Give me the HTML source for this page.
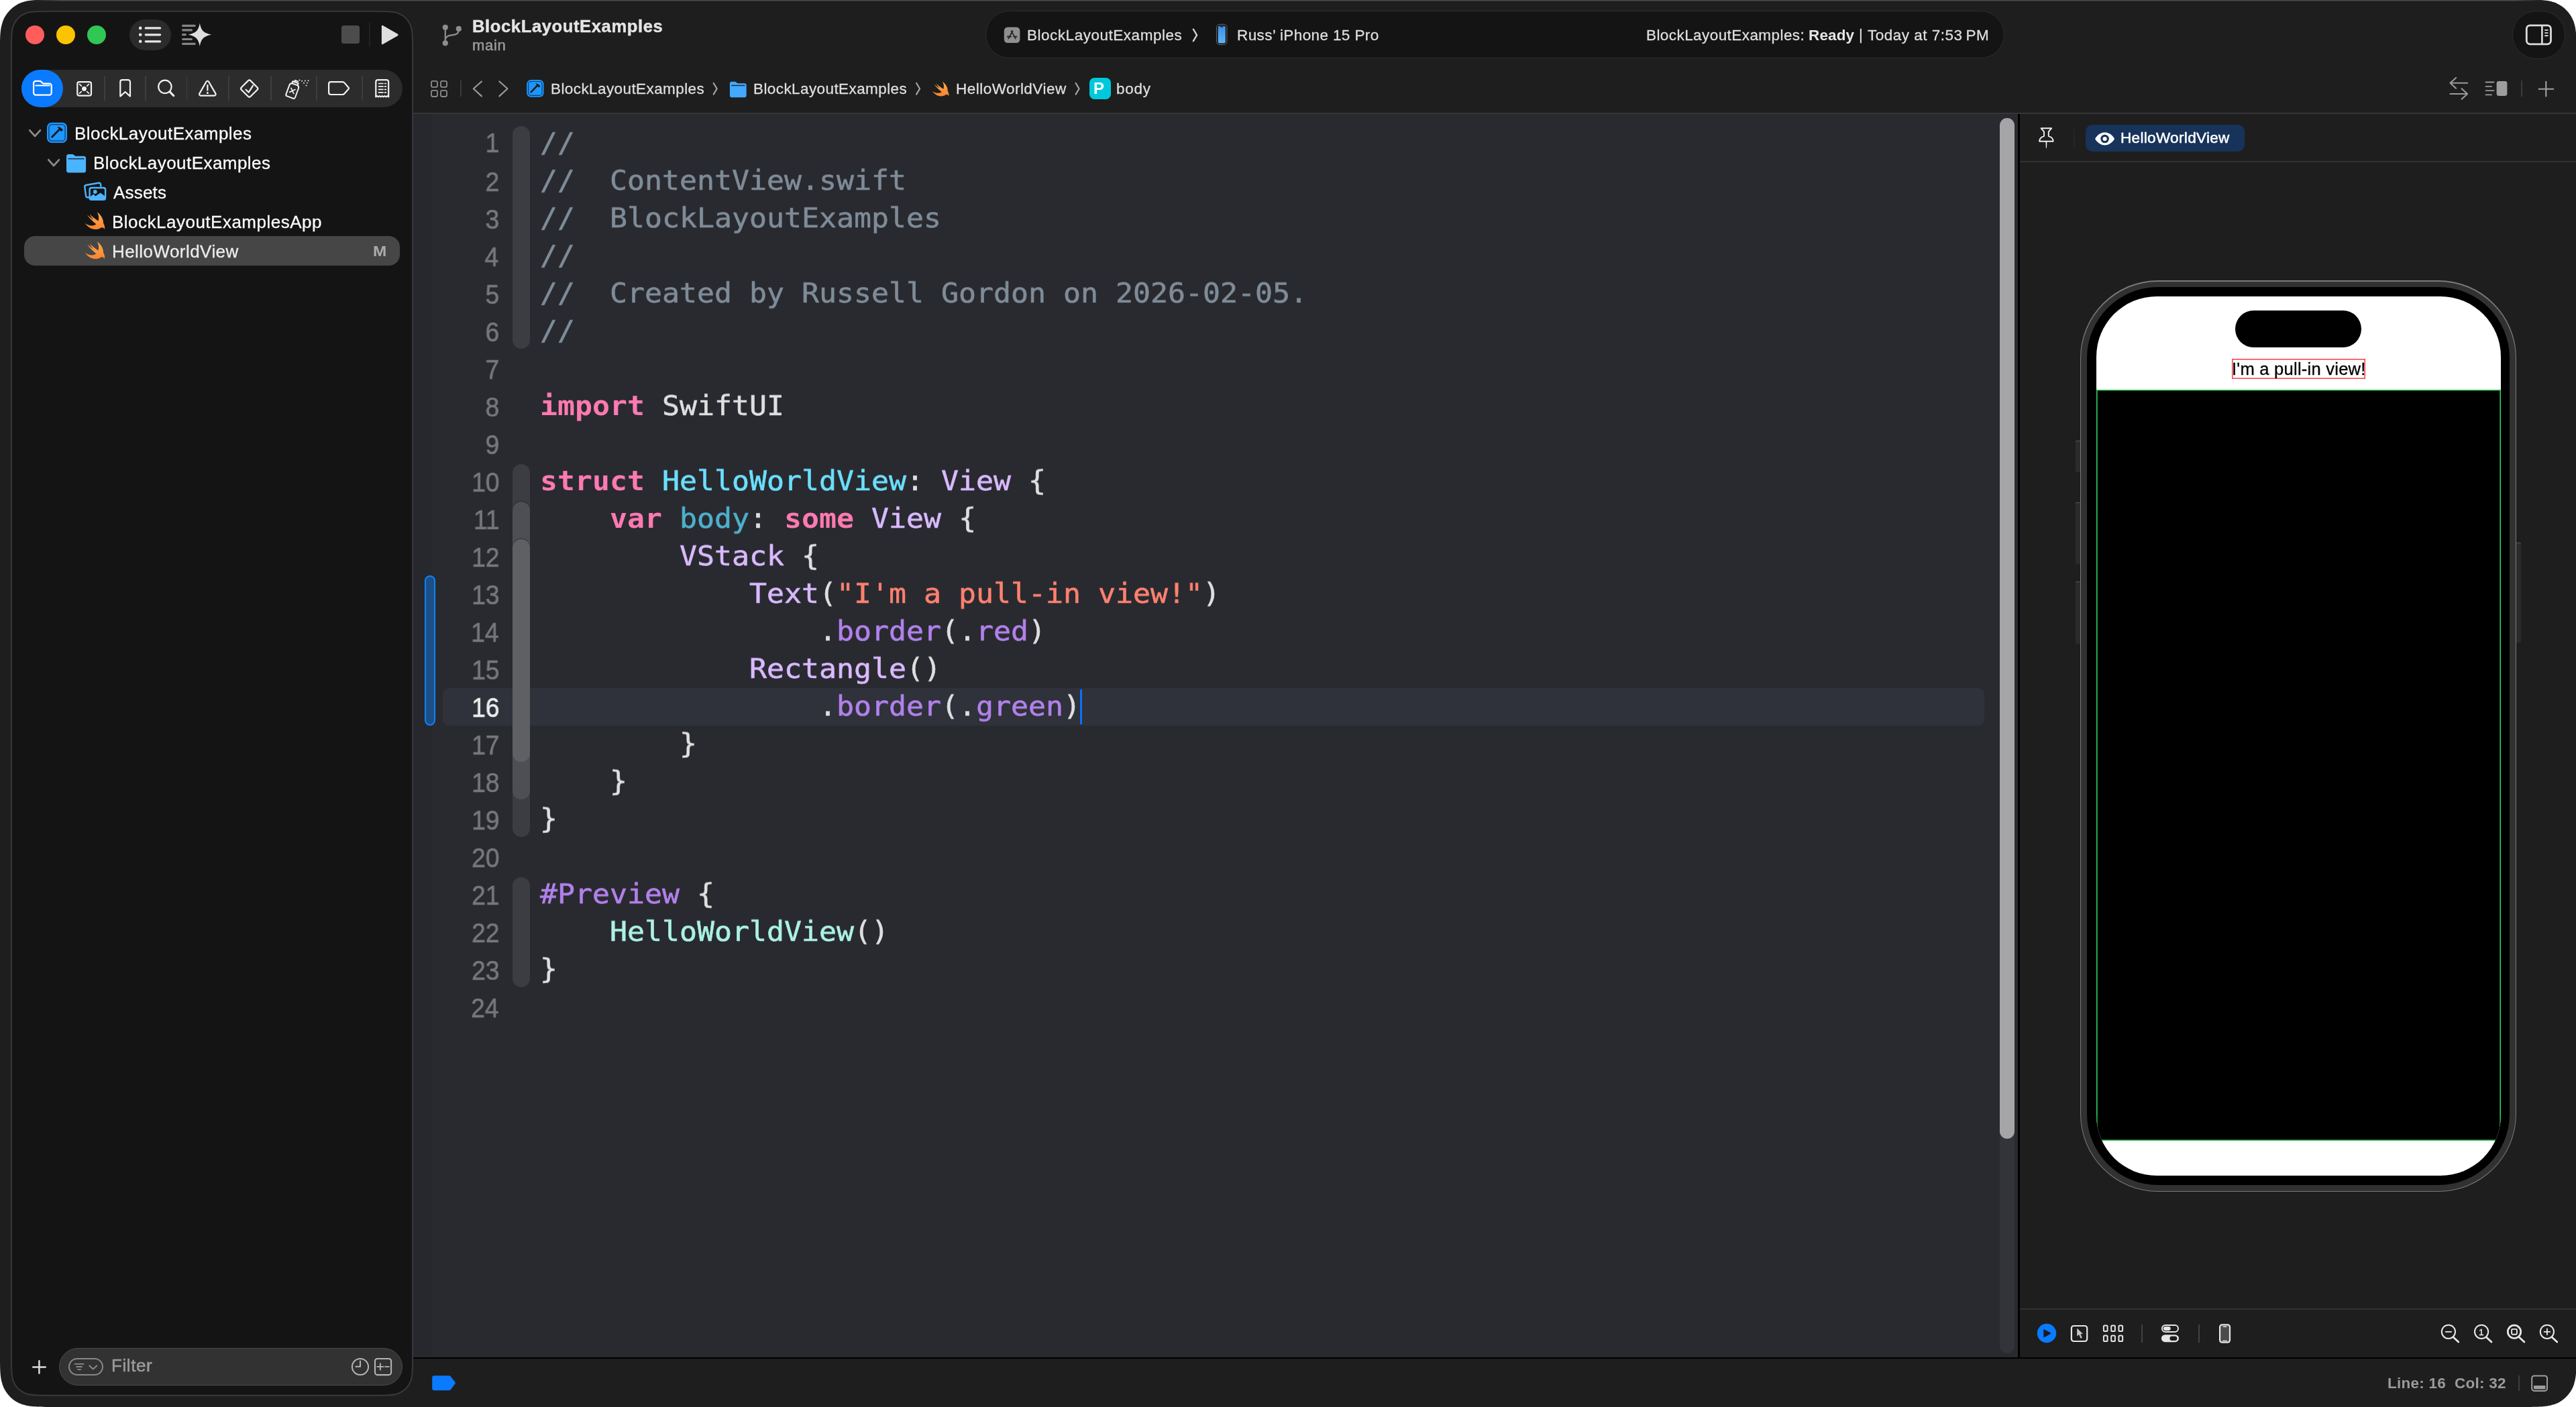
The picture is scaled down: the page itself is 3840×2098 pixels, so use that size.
<!DOCTYPE html>
<html lang="en"><head><meta charset="utf-8"><title>BlockLayoutExamples — HelloWorldView.swift</title>
<style>
html,body{margin:0;padding:0;background:#fff;}
body{width:3840px;height:2098px;overflow:hidden;position:relative;}
.a{position:absolute;white-space:pre;box-sizing:border-box;}
.s{font-family:"Liberation Sans", sans-serif;will-change:transform;-webkit-text-stroke:0.3px;}
.m{font-family:"DejaVu Sans Mono", "Liberation Mono", monospace;will-change:transform;}
svg{overflow:visible;}
.cl{left:805px;line-height:56px;font-size:43.19px;color:#dfdfe0;-webkit-text-stroke:0.6px;transform:scaleY(0.96);transform-origin:0 42.94px;}
.cl b{-webkit-text-stroke:0;}
</style></head>
<body>
<svg class="a" style="left:0;top:0" width="3840" height="2098" viewBox="0 0 3840 2098"><defs><linearGradient id="tl" x1="0" x2="1" y1="0" y2="0"><stop offset="0" stop-color="#4c4c4c" stop-opacity="0"/><stop offset="0.012" stop-color="#4c4c4c"/><stop offset="0.988" stop-color="#4c4c4c"/><stop offset="1" stop-color="#4c4c4c" stop-opacity="0"/></linearGradient></defs><path d="M79.49 -0.40 L3761.11 -0.40 C3784.00 -0.40 3795.44 -0.40 3805.76 3.01 L3807.76 3.50 C3821.21 8.39 3831.81 18.99 3836.70 32.44 L3837.19 34.44 C3840.60 44.76 3840.60 56.20 3840.60 79.09 L3840.60 2018.51 C3840.60 2041.40 3840.60 2052.84 3837.19 2063.16 L3836.70 2065.16 C3831.81 2078.61 3821.21 2089.21 3807.76 2094.10 L3805.76 2094.59 C3795.44 2098.00 3784.00 2098.00 3761.11 2098.00 L79.49 2098.00 C56.60 2098.00 45.16 2098.00 34.84 2094.59 L32.84 2094.10 C19.39 2089.21 8.79 2078.61 3.90 2065.16 L3.41 2063.16 C0.00 2052.84 0.00 2041.40 0.00 2018.51 L0.00 79.09 C0.00 56.20 0.00 44.76 3.41 34.44 L3.90 32.44 C8.79 18.99 19.39 8.39 32.84 3.50 L34.84 3.01 C45.16 -0.40 56.60 -0.40 79.49 -0.40 Z" fill="#1e1e1e"/><rect x="48" y="0" width="3744" height="1.5" fill="url(#tl)"/><path d="M70.40 16.90 L561.60 16.90 C577.00 16.90 584.71 16.90 591.65 19.19 L593.00 19.52 C602.05 22.82 609.18 29.95 612.48 39.00 L612.81 40.35 C615.10 47.29 615.10 55.00 615.10 70.40 L615.10 2027.30 C615.10 2042.70 615.10 2050.41 612.81 2057.35 L612.48 2058.70 C609.18 2067.75 602.05 2074.88 593.00 2078.18 L591.65 2078.51 C584.71 2080.80 577.00 2080.80 561.60 2080.80 L70.40 2080.80 C55.00 2080.80 47.29 2080.80 40.35 2078.51 L39.00 2078.18 C29.95 2074.88 22.82 2067.75 19.52 2058.70 L19.19 2057.35 C16.90 2050.41 16.90 2042.70 16.90 2027.30 L16.90 70.40 C16.90 55.00 16.90 47.29 19.19 40.35 L19.52 39.00 C22.82 29.95 29.95 22.82 39.00 19.52 L40.35 19.19 C47.29 16.90 55.00 16.90 70.40 16.90 Z" fill="#141414" stroke="#3a3a3a" stroke-width="1.9"/></svg>
<div class="a" style="left:38px;top:38px;width:28px;height:28px;background:#ff5d5b;border-radius:14px;"></div>
<div class="a" style="left:84px;top:38px;width:28px;height:28px;background:#fcc400;border-radius:14px;"></div>
<div class="a" style="left:130px;top:38px;width:28px;height:28px;background:#30c755;border-radius:14px;"></div>
<div class="a" style="left:193px;top:29px;width:62px;height:46px;background:#2b2b2b;border-radius:23px;"></div>
<svg class="a" style="left:0px;top:0px;" width="320" height="100" viewBox="0 0 320 100"><circle cx="209.2" cy="41.9" r="2.3" fill="#e6e6e6"/><rect x="215.6" y="40.3" width="24.6" height="3.2" rx="1.6" fill="#e6e6e6"/><circle cx="209.2" cy="51.8" r="2.3" fill="#e6e6e6"/><rect x="215.6" y="50.199999999999996" width="24.6" height="3.2" rx="1.6" fill="#e6e6e6"/><circle cx="209.2" cy="61.8" r="2.3" fill="#e6e6e6"/><rect x="215.6" y="60.199999999999996" width="24.6" height="3.2" rx="1.6" fill="#e6e6e6"/></svg>
<svg class="a" style="left:0px;top:0px;" width="320" height="100" viewBox="0 0 320 100"><rect x="271" y="36.699999999999996" width="20.69999999999999" height="3.2" rx="1.6" fill="#858585"/><rect x="271" y="43.3" width="16" height="3.2" rx="1.6" fill="#858585"/><rect x="271" y="50.1" width="7" height="3.2" rx="1.6" fill="#858585"/><rect x="271" y="56.9" width="16" height="3.2" rx="1.6" fill="#858585"/><rect x="271" y="63.699999999999996" width="20.69999999999999" height="3.2" rx="1.6" fill="#858585"/><path d="M297.8 34.6 C299.6 45.5 303.8 49.7 315.4 51.7 C303.8 53.7 299.6 57.9 297.8 69 C296 57.9 291.8 53.7 280.4 51.7 C291.8 49.7 296 45.5 297.8 34.6Z" fill="#dedede"/></svg>
<div class="a" style="left:509px;top:38px;width:27px;height:27px;background:#4c4c4c;border-radius:3.5px;"></div>
<div class="a" style="left:550px;top:34px;width:2px;height:36px;background:#222;"></div>
<svg class="a" style="left:0px;top:0px;" width="700" height="100" viewBox="0 0 700 100"><path d="M570.7 38 L593 50.7 Q594.5 52 593 53.2 L570.7 66 Q568.9 66.8 568.9 65 L568.9 39 Q568.9 37.2 570.7 38Z" fill="#dfdfdf"/></svg>
<div class="a" style="left:32px;top:104px;width:568px;height:56px;background:#2c2c2c;border-radius:28px;"></div>
<div class="a" style="left:32px;top:104px;width:62px;height:56px;background:#0a7aff;border-radius:28px;"></div>
<div class="a" style="left:155.25px;top:114px;width:1.5px;height:36px;background:#3e3e3e;"></div>
<div class="a" style="left:216.25px;top:114px;width:1.5px;height:36px;background:#3e3e3e;"></div>
<div class="a" style="left:277.75px;top:114px;width:1.5px;height:36px;background:#3e3e3e;"></div>
<div class="a" style="left:340.25px;top:114px;width:1.5px;height:36px;background:#3e3e3e;"></div>
<div class="a" style="left:403.25px;top:114px;width:1.5px;height:36px;background:#3e3e3e;"></div>
<div class="a" style="left:471.25px;top:114px;width:1.5px;height:36px;background:#3e3e3e;"></div>
<div class="a" style="left:539.25px;top:114px;width:1.5px;height:36px;background:#3e3e3e;"></div>
<div class="a" style="left:36px;top:352px;width:560px;height:44px;background:#464646;border-radius:16px;"></div>
<div class="a" style="left:88px;top:2010px;width:512px;height:56px;background:#323232;border-radius:28px;border:1px solid #4a4a4a;"></div>
<div class="a" style="left:102px;top:2025px;width:52px;height:26px;border-radius:13px;border:2px solid #878787;"></div>
<div class="a" style="left:1469.3px;top:16px;width:1519px;height:71.4px;background:#141414;border-radius:35.7px;border:1.3px solid #2d2d2d;"></div>
<div class="a" style="left:3745.3px;top:16px;width:78.4px;height:71.6px;background:#141414;border-radius:35.8px;border:1.3px solid #2d2d2d;"></div>
<div class="a" style="left:616px;top:168px;width:2392px;height:2px;background:#363636;"></div>
<div class="a" style="left:616px;top:170px;width:2392px;height:1854px;background:#292a30;"></div>
<div class="a" style="left:616px;top:170px;width:29px;height:1854px;background:#27282e;"></div>
<div class="a" style="left:3008px;top:170px;width:3px;height:1854px;background:#000;"></div>
<div class="a" style="left:616px;top:2024px;width:3224px;height:2px;background:#000;"></div>
<div class="a" style="left:3008px;top:168px;width:832px;height:2px;background:#363636;"></div>
<div class="a" style="left:3011px;top:240px;width:829px;height:2px;background:#313131;"></div>
<div class="a" style="left:3011px;top:1951px;width:829px;height:2px;background:#313131;"></div>
<div class="a" style="left:660px;top:1026px;width:2298px;height:56px;background:#2f323a;border-radius:9px;"></div>
<div class="a" style="left:2981px;top:175.5px;width:22px;height:1842.5px;background:#33343a;border-radius:11px;"></div>
<div class="a" style="left:2981px;top:175.5px;width:22px;height:1522px;background:#a5a5a7;border-radius:11px;"></div>
<div class="a" style="left:633px;top:858px;width:16px;height:224px;background:#1c4f86;border-radius:8px;border:2px solid #0a84ff;"></div>
<div class="a" style="left:764px;top:188px;width:26px;height:332px;background:#3c3d43;border-radius:13px 13px 13px 13px;"></div>
<div class="a" style="left:764px;top:692px;width:26px;height:556px;background:#3c3d43;border-radius:13px 13px 13px 13px;"></div>
<div class="a" style="left:764px;top:748px;width:26px;height:444px;background:#4e4f54;border-radius:13px 13px 13px 13px;box-shadow:0 -1.5px 0 #2d2e33;"></div>
<div class="a" style="left:764px;top:804px;width:26px;height:332px;background:#5f6064;border-radius:13px 13px 13px 13px;box-shadow:0 -1.5px 0 #3a3b40;"></div>
<div class="a" style="left:764px;top:1308px;width:26px;height:164px;background:#3c3d43;border-radius:13px 13px 13px 13px;"></div>
<div class="a" style="left:1609.6px;top:1027.5px;width:3.6px;height:52px;background:#0a70ff;"></div>
<div class="a m cl" style="top:184.26px;"><span style="color:#7f8c98">//</span></div>
<div class="a m cl" style="top:240.26px;"><span style="color:#7f8c98">//  ContentView.swift</span></div>
<div class="a m cl" style="top:296.26px;"><span style="color:#7f8c98">//  BlockLayoutExamples</span></div>
<div class="a m cl" style="top:352.26px;"><span style="color:#7f8c98">//</span></div>
<div class="a m cl" style="top:408.26px;"><span style="color:#7f8c98">//  Created by Russell Gordon on 2026-02-05.</span></div>
<div class="a m cl" style="top:464.26px;"><span style="color:#7f8c98">//</span></div>
<div class="a m cl" style="top:576.26px;"><b style="color:#ff7ab2">import</b> SwiftUI</div>
<div class="a m cl" style="top:688.26px;"><b style="color:#ff7ab2">struct</b> <span style="color:#6bdfff">HelloWorldView</span>: <span style="color:#dabaff">View</span> {</div>
<div class="a m cl" style="top:744.26px;">    <b style="color:#ff7ab2">var</b> <span style="color:#4eb0cc">body</span>: <b style="color:#ff7ab2">some</b> <span style="color:#dabaff">View</span> {</div>
<div class="a m cl" style="top:800.26px;">        <span style="color:#dabaff">VStack</span> {</div>
<div class="a m cl" style="top:856.26px;">            <span style="color:#dabaff">Text</span>(<span style="color:#ff8170">"I'm a pull-in view!"</span>)</div>
<div class="a m cl" style="top:912.26px;">                .<span style="color:#b281eb">border</span>(.<span style="color:#b281eb">red</span>)</div>
<div class="a m cl" style="top:968.26px;">            <span style="color:#dabaff">Rectangle</span>()</div>
<div class="a m cl" style="top:1024.26px;">                .<span style="color:#b281eb">border</span>(.<span style="color:#b281eb">green</span>)</div>
<div class="a m cl" style="top:1080.26px;">        }</div>
<div class="a m cl" style="top:1136.26px;">    }</div>
<div class="a m cl" style="top:1192.26px;">}</div>
<div class="a m cl" style="top:1304.26px;"><span style="color:#b281eb">#Preview</span> {</div>
<div class="a m cl" style="top:1360.26px;">    <span style="color:#acf2e4">HelloWorldView</span>()</div>
<div class="a m cl" style="top:1416.26px;">}</div>
<div class="a" style="left:3094px;top:657px;width:8px;height:47px;background:#2b2b2b;border-radius:2px;box-shadow:inset 0 1px 0 #555;"></div>
<div class="a" style="left:3094px;top:749px;width:8px;height:92px;background:#2b2b2b;border-radius:2px;box-shadow:inset 0 1px 0 #555;"></div>
<div class="a" style="left:3094px;top:867px;width:8px;height:93px;background:#2b2b2b;border-radius:2px;box-shadow:inset 0 1px 0 #555;"></div>
<div class="a" style="left:3750px;top:809px;width:8px;height:149px;background:#2b2b2b;border-radius:2px;box-shadow:inset 0 1px 0 #555;"></div>
<div class="a" style="left:3101px;top:418.4px;width:649.8px;height:1358.2px;background:#7a7a7a;border-radius:116px;"></div>
<div class="a" style="left:3102.1px;top:419.5px;width:647.5999999999999px;height:1356.0px;background:#313131;border-radius:115px;"></div>
<div class="a" style="left:3110.6px;top:428.0px;width:630.5999999999999px;height:1339.0px;background:#000;border-radius:106px;"></div>
<div class="a" style="left:3125.4px;top:441.9px;width:602.2px;height:1311px;background:#fff;border-radius:90px;overflow:hidden;"><div class="a" style="left:206.7px;top:21.4px;width:188px;height:55px;border-radius:27.5px;background:#000"></div><div class="a" style="left:201.9px;top:93.3px;width:198.9px;height:29.7px;box-shadow:inset 0 0 0 1.5px #ff3b41"></div><div class="a" style="left:0;top:139.3px;width:602.2px;height:1120.2px;background:#000;box-shadow:inset 0 0 0 1.6px #30d158"></div></div>
<div class="a" style="left:3109px;top:186px;width:237px;height:40px;background:#17335a;border-radius:10px;"></div>
<div class="a" style="left:3091px;top:192px;width:2px;height:27px;background:#262626;"></div>
<div class="a" style="left:3192px;top:1974.5px;width:2px;height:27.5px;background:#424242;"></div>
<div class="a" style="left:3277px;top:1974.5px;width:2px;height:27.5px;background:#424242;"></div>
<div class="a" style="left:3754px;top:2050.6px;width:1.5px;height:23px;background:#3d3d3d;"></div>
<div class="a" style="left:686px;top:120px;width:2px;height:24px;background:#3a3a3a;"></div>
<div class="a" style="left:1624px;top:115.8px;width:32px;height:32px;background:#00c8dc;border-radius:7.5px;"></div>
<div class="a" style="left:3758px;top:120px;width:2px;height:24px;background:#3b3b3b;"></div>
<svg class="a" style="left:0;top:0" width="3840" height="2098" viewBox="0 0 3840 2098"><path d="M50.1 138.6 V124 a3.1 3.1 0 0 1 3.1-3.1 h6 a3.2 3.2 0 0 1 2.3 1 l1.5 1.7 a3.2 3.2 0 0 0 2.3 1 h8.3 a3.1 3.1 0 0 1 3.1 3.1 v10.9 a3.1 3.1 0 0 1-3.1 3.1 h-20.4 a3.1 3.1 0 0 1-3.1-3.1 z" fill="none" stroke="#ffffff" stroke-width="2.2" stroke-linecap="round" stroke-linejoin="round" />
<path d="M53.4 127.6 H73.6" fill="none" stroke="#ffffff" stroke-width="2.0" stroke-linecap="round" stroke-linejoin="round" />
<rect x="115.3" y="122.2" width="20.7" height="20.5" rx="3" fill="none" stroke="#f2f2f2" stroke-width="2.2"/>
<circle cx="125.5" cy="132.4" r="3.4" fill="#f2f2f2"/>
<path d="M121.3 128.20000000000002 L118.6 125.7" fill="none" stroke="#f2f2f2" stroke-width="1.8" stroke-linecap="round" stroke-linejoin="round" />
<path d="M129.7 128.20000000000002 L132.4 125.7" fill="none" stroke="#f2f2f2" stroke-width="1.8" stroke-linecap="round" stroke-linejoin="round" />
<path d="M121.3 136.6 L118.6 139.1" fill="none" stroke="#f2f2f2" stroke-width="1.8" stroke-linecap="round" stroke-linejoin="round" />
<path d="M129.7 136.6 L132.4 139.1" fill="none" stroke="#f2f2f2" stroke-width="1.8" stroke-linecap="round" stroke-linejoin="round" />
<path d="M179.3 143.6 V122.2 a3 3 0 0 1 3-3 h8.7 a3 3 0 0 1 3 3 V143.6 l-7.35-6.6 z" fill="none" stroke="#f2f2f2" stroke-width="2.2" stroke-linecap="round" stroke-linejoin="round" />
<circle cx="245.9" cy="129.3" r="9.7" fill="none" stroke="#f2f2f2" stroke-width="2.2"/>
<path d="M252.9 136.6 L258.8 142.7" fill="none" stroke="#f2f2f2" stroke-width="3" stroke-linecap="round" stroke-linejoin="round" />
<path d="M307.6 121.8 a2 2 0 0 1 3.5 0 l10.2 17.6 a2.1 2.1 0 0 1-1.8 3.2 h-20.3 a2.1 2.1 0 0 1-1.8-3.2 z" fill="none" stroke="#f2f2f2" stroke-width="2.2" stroke-linecap="round" stroke-linejoin="round" />
<path d="M309.35 127 V134.6" fill="none" stroke="#f2f2f2" stroke-width="2.2" stroke-linecap="round" stroke-linejoin="round" />
<circle cx="309.35" cy="138.5" r="1.5" fill="#f2f2f2"/>
<rect x="-9.6" y="-9.6" width="19.2" height="19.2" rx="2.6" transform="translate(371.7 132.1) rotate(45)" fill="none" stroke="#f2f2f2" stroke-width="2.2"/>
<path d="M366.6 133.7 L370.7 137.7 L377.1 127.7" fill="none" stroke="#f2f2f2" stroke-width="2.2" stroke-linecap="round" stroke-linejoin="round" />
<g transform="translate(436.6 133.6) rotate(20)" fill="none" stroke="#f2f2f2" stroke-width="2" stroke-linejoin="round" stroke-linecap="round"><path d="M-7.2 9.8 V-4.6 a4 4 0 0 1 2.6-3.7 h9.2 a4 4 0 0 1 2.6 3.7 V9.8 a2.4 2.4 0 0 1-2.4 2.4 h-9.6 a2.4 2.4 0 0 1-2.4-2.4z"/><path d="M-4.4 -8.6 V-11.6 h8.8 V-8.6"/><path d="M-1.6 -12 v-2 h4.4" stroke-width="2"/><path d="M-3.2 -1.2 L3.2 5.2 M3.2 -1.2 L-3.2 5.2" stroke-width="1.7"/></g>
<circle cx="450.2" cy="120.7" r="0.95" fill="#f2f2f2"/>
<circle cx="454.8" cy="120.5" r="0.95" fill="#f2f2f2"/>
<circle cx="459.6" cy="120.2" r="0.95" fill="#f2f2f2"/>
<circle cx="453" cy="123.8" r="0.95" fill="#f2f2f2"/>
<circle cx="458" cy="123.6" r="0.95" fill="#f2f2f2"/>
<circle cx="456.5" cy="127.5" r="0.95" fill="#f2f2f2"/>
<circle cx="446.5" cy="119.5" r="0.95" fill="#f2f2f2"/>
<path d="M490.1 138 V125.2 a3 3 0 0 1 3-3 h17.6 a3.4 3.4 0 0 1 2.6 1.2 l6.2 7 a1.8 1.8 0 0 1 0 2.4 l-6.2 7 a3.4 3.4 0 0 1-2.6 1.2 h-17.6 a3 3 0 0 1-3-3z" fill="none" stroke="#f2f2f2" stroke-width="2.2" stroke-linecap="round" stroke-linejoin="round" />
<path d="M560.3 144.4 V122.1 a3 3 0 0 1 3-3 h12.9 a3 3 0 0 1 3 3 V144.4 l-1.9-1.3 l-1.9 1.3 l-1.9-1.3 l-1.9 1.3 l-1.9-1.3 l-1.9 1.3 l-1.9-1.3 l-1.9 1.3 l-1.9-1.3 z" fill="none" stroke="#f2f2f2" stroke-width="2.2" stroke-linecap="round" stroke-linejoin="round" />
<path d="M564.6 124.5 H571" fill="none" stroke="#f2f2f2" stroke-width="1.7" stroke-linecap="round" stroke-linejoin="round" />
<path d="M573.6 124.5 H575.4" fill="none" stroke="#f2f2f2" stroke-width="1.7" stroke-linecap="round" stroke-linejoin="round" />
<path d="M564.6 128.9 H571" fill="none" stroke="#f2f2f2" stroke-width="1.7" stroke-linecap="round" stroke-linejoin="round" />
<path d="M573.6 128.9 H575.4" fill="none" stroke="#f2f2f2" stroke-width="1.7" stroke-linecap="round" stroke-linejoin="round" />
<path d="M564.6 133.4 H571" fill="none" stroke="#f2f2f2" stroke-width="1.7" stroke-linecap="round" stroke-linejoin="round" />
<path d="M573.6 133.4 H575.4" fill="none" stroke="#f2f2f2" stroke-width="1.7" stroke-linecap="round" stroke-linejoin="round" />
<path d="M564.6 137.9 H571" fill="none" stroke="#f2f2f2" stroke-width="1.7" stroke-linecap="round" stroke-linejoin="round" />
<path d="M573.6 137.9 H575.4" fill="none" stroke="#f2f2f2" stroke-width="1.7" stroke-linecap="round" stroke-linejoin="round" />
<path d="M44.3 194.3 L52.1 203 L59.9 194.3" fill="none" stroke="#8b8b8b" stroke-width="2.7" stroke-linecap="round" stroke-linejoin="round" />
<path d="M72.3 238.3 L80.1 247 L87.9 238.3" fill="none" stroke="#8b8b8b" stroke-width="2.7" stroke-linecap="round" stroke-linejoin="round" />
<defs><linearGradient id="sw" x1="0" y1="0" x2="0" y2="1"><stop offset="0" stop-color="#ffac4d"/><stop offset="1" stop-color="#f8842f"/></linearGradient></defs>
<g transform="translate(70 182.7) scale(1.0)"><rect x="0" y="0" width="30" height="30.4" rx="7.2" fill="#1e96ff"/><rect x="2.9" y="2.9" width="24.2" height="24.6" rx="4.6" fill="none" stroke="#0f3c6e" stroke-width="1.3"/><path d="M7.6 21.6 L18.6 10.2" stroke="#1a1a1a" stroke-width="2.9" stroke-linecap="round"/><path d="M15.4 6.4 C18.4 6.2 21 7.6 22.6 9.6 L24 11.2 L21.4 13.6 L20 12.2 C19 11 17.6 9.2 15.4 6.4Z" fill="#1a1a1a"/></g>
<g transform="translate(99 230) scale(1.0)"><path d="M0 20.6 V3.4 a3.4 3.4 0 0 1 3.4-3.4 h5.4 a3.6 3.6 0 0 1 2.4 0.9 l1.1 1 a3.6 3.6 0 0 0 2.4 0.9 h11 a3.4 3.4 0 0 1 3.4 3.4 v17.8 a3.5 3.5 0 0 1-3.5 3.5 h-22.1 a3.5 3.5 0 0 1-3.5-3.5z" fill="#4bb4ff"/><path d="M3.2 6.75 H25.9" stroke="#16181c" stroke-width="1.6" stroke-linecap="round" opacity="0.85"/></g>
<g fill="none" stroke="#4db5ff" stroke-width="2.4" stroke-linejoin="round"><path d="M133 294.2 L131 294.3 a2.6 2.6 0 0 1-2.9-2.1 L126.3 279 a2.6 2.6 0 0 1 2.1-3 l18.6-3.2 a2.6 2.6 0 0 1 3 2.1 l0.6 3.6"/><rect x="133.6" y="280" width="23.5" height="17.9" rx="2.8"/></g>
<circle cx="141.8" cy="286" r="2.9" fill="#4db5ff"/>
<path d="M134.4 293.2 L139.4 289.6 L142.4 292.6 L149.7 287.4 L156.4 292.4 V297 H134.4Z" fill="#4db5ff"/>
<path transform="translate(127 316) scale(1.0)" fill="url(#sw)" d="M17.9 0.3 C23 4 27.5 10.5 27 16.5 C28.5 19 29.6 22.5 29.1 25.9 C27.8 23.6 25.8 22.6 23.6 23.4 C20.5 25.6 16.5 26.6 12.5 25.8 C7.5 24.8 3 21.5 0 17 C3.5 19.5 7.5 20.8 11 20.4 C13.2 20.2 15 19.4 16.4 18.3 C11.5 14.5 6.5 9.5 2.9 4.5 C6 7.2 9.2 9.6 12.6 11.8 C10.4 9.2 8.2 6.2 6.4 3.2 C10.5 7 15 10.8 19.6 13.4 C20.8 9.2 20.2 4.4 17.9 0.3 Z"/>
<path transform="translate(127 360) scale(1.0)" fill="url(#sw)" d="M17.9 0.3 C23 4 27.5 10.5 27 16.5 C28.5 19 29.6 22.5 29.1 25.9 C27.8 23.6 25.8 22.6 23.6 23.4 C20.5 25.6 16.5 26.6 12.5 25.8 C7.5 24.8 3 21.5 0 17 C3.5 19.5 7.5 20.8 11 20.4 C13.2 20.2 15 19.4 16.4 18.3 C11.5 14.5 6.5 9.5 2.9 4.5 C6 7.2 9.2 9.6 12.6 11.8 C10.4 9.2 8.2 6.2 6.4 3.2 C10.5 7 15 10.8 19.6 13.4 C20.8 9.2 20.2 4.4 17.9 0.3 Z"/>
<path d="M3123 207 C3127.5 200 3132.5 197.6 3137.6 197.6 C3142.7 197.6 3147.7 200 3152.2 207 C3147.7 214 3142.7 216.4 3137.6 216.4 C3132.5 216.4 3127.5 214 3123 207Z" fill="#ffffff"/>
<circle cx="3137.6" cy="207" r="6.3" fill="#17335a"/><circle cx="3137.6" cy="207" r="3.1" fill="#fff"/>
<circle cx="3051" cy="1988" r="14.2" fill="#0a7aff"/>
<path d="M3047 1982.9 L3056.6 1988.1 L3047 1993.4Z" fill="#1c1c1c" stroke="#1c1c1c" stroke-width="1.4" stroke-linejoin="round"/>
<rect x="3087.9" y="1977" width="23.3" height="23" rx="3.4" fill="none" stroke="#e6e6e6" stroke-width="2.2"/>
<path d="M3096.2 1980.6 L3096.2 1992.6 L3099.1 1990 L3101.6 1995.8 L3103.8 1994.8 L3101.3 1989.2 L3105 1988.9Z" fill="#c4c4c4"/>
<rect x="3135.9" y="1976.6" width="5.7" height="8.5" rx="1.6" fill="none" stroke="#e6e6e6" stroke-width="2"/>
<rect x="3135.9" y="1991.5" width="5.7" height="8.5" rx="1.6" fill="none" stroke="#e6e6e6" stroke-width="2"/>
<rect x="3147.2" y="1976.6" width="5.7" height="8.5" rx="1.6" fill="none" stroke="#e6e6e6" stroke-width="2"/>
<rect x="3147.2" y="1991.5" width="5.7" height="8.5" rx="1.6" fill="none" stroke="#e6e6e6" stroke-width="2"/>
<rect x="3158.4" y="1976.6" width="5.7" height="8.5" rx="1.6" fill="none" stroke="#e6e6e6" stroke-width="2"/>
<rect x="3158.4" y="1991.5" width="5.7" height="8.5" rx="1.6" fill="none" stroke="#e6e6e6" stroke-width="2"/>
<rect x="3222.9" y="1976.1" width="24.1" height="9.8" rx="4.9" fill="none" stroke="#e6e6e6" stroke-width="2"/>
<rect x="3224.9" y="1978.1" width="10.8" height="5.8" rx="2.9" fill="#e6e6e6"/>
<rect x="3221.9" y="1990.2" width="26.1" height="11" rx="5.5" fill="#e6e6e6"/>
<rect x="3234.4" y="1992.4" width="11" height="6.6" rx="3.3" fill="#1e1e1e"/>
<rect x="3309.1" y="1975.4" width="14.9" height="26.3" rx="3.4" fill="#4b4b4b" stroke="#e6e6e6" stroke-width="2.2"/>
<path d="M3314.4 1978.2 H3318.8" fill="none" stroke="#e6e6e6" stroke-width="1.6" stroke-linecap="round" stroke-linejoin="round" />
<path d="M3313.6 1999.3 H3319.6" fill="none" stroke="#e6e6e6" stroke-width="1.3" stroke-linecap="round" stroke-linejoin="round" />
<circle cx="3649.9" cy="1985.8" r="10.1" fill="none" stroke="#e9e9e9" stroke-width="2.0"/>
<path d="M3657.5 1994.2 L3664.8 2001.0" fill="none" stroke="#e9e9e9" stroke-width="2.7" stroke-linecap="round" stroke-linejoin="round" />
<path d="M3645.7000000000003 1985.8 H3654.1" fill="none" stroke="#e9e9e9" stroke-width="1.8" stroke-linecap="round" stroke-linejoin="round" />
<circle cx="3699.1" cy="1985.8" r="10.1" fill="none" stroke="#e9e9e9" stroke-width="2.0"/>
<path d="M3706.7 1994.2 L3714.0 2001.0" fill="none" stroke="#e9e9e9" stroke-width="2.7" stroke-linecap="round" stroke-linejoin="round" />
<text x="3698.7999999999997" y="1990.7" font-family="Liberation Sans, sans-serif" font-size="13.6" text-anchor="middle" fill="#e9e9e9" stroke="#e9e9e9" stroke-width="0.35">1</text>
<circle cx="3748" cy="1985.8" r="9.7" fill="none" stroke="#e9e9e9" stroke-width="2.7"/>
<path d="M3755.6 1994.2 L3762.9 2001.0" fill="none" stroke="#e9e9e9" stroke-width="2.7" stroke-linecap="round" stroke-linejoin="round" />
<rect x="3744.1" y="1981.8999999999999" width="7.8" height="7.8" rx="1.4" fill="none" stroke="#e9e9e9" stroke-width="1.9"/>
<circle cx="3796.9" cy="1985.8" r="10.1" fill="none" stroke="#e9e9e9" stroke-width="2.0"/>
<path d="M3804.5 1994.2 L3811.8 2001.0" fill="none" stroke="#e9e9e9" stroke-width="2.7" stroke-linecap="round" stroke-linejoin="round" />
<path d="M3792.5 1985.8 H3801.3" fill="none" stroke="#e9e9e9" stroke-width="1.8" stroke-linecap="round" stroke-linejoin="round" />
<path d="M3796.9 1981.3999999999999 V1990.2" fill="none" stroke="#e9e9e9" stroke-width="1.8" stroke-linecap="round" stroke-linejoin="round" />
<rect x="3774.2" y="2051.5" width="22.8" height="22.4" rx="3.4" fill="none" stroke="#9e9e9e" stroke-width="2"/>
<rect x="3777" y="2066" width="17.4" height="5.4" rx="0.8" fill="#9e9e9e"/>
<path d="M644.2 2054.2 a3 3 0 0 1 3-3 h22 a3.4 3.4 0 0 1 2.7 1.3 l6.4 8.3 a2.3 2.3 0 0 1 0 2.8 l-6.4 8.3 a3.4 3.4 0 0 1-2.7 1.3 h-22 a3 3 0 0 1-3-3z" fill="#0a7aff"/>
<circle cx="663.8" cy="40.8" r="4.1" fill="#8e8e8e"/>
<circle cx="683.8" cy="42.9" r="4.1" fill="#8e8e8e"/>
<circle cx="663.8" cy="64.3" r="4.1" fill="#8e8e8e"/>
<path d="M663.8 40.8 V64.3" fill="none" stroke="#8e8e8e" stroke-width="2.2" stroke-linecap="round" stroke-linejoin="round" />
<path d="M683.8 42.9 C683.8 50.4 680.4 51.6 675 52.1 C668.6 52.7 664.6 54.4 663.8 58.6" fill="none" stroke="#8e8e8e" stroke-width="2.2" stroke-linecap="round" stroke-linejoin="round" />
<rect x="1496.8" y="40.6" width="23.6" height="23.3" rx="5.2" fill="#8f8f8f"/>
<g stroke="#1f1f1f" stroke-width="1.7" stroke-linecap="round" fill="none"><path d="M1509.6 46.2 L1503.2 57.6"/><path d="M1507.4 46.2 L1513.9 57.6"/><path d="M1501.6 54.6 H1507.2 M1511.4 54.6 H1515.8"/></g>
<path d="M1778.9 43.6 L1784.1000000000001 52.400000000000006 L1778.9 61.2" fill="none" stroke="#d6d6d6" stroke-width="2.3" stroke-linecap="round" stroke-linejoin="round" />
<defs><linearGradient id="ph" x1="0" y1="0" x2="0" y2="1"><stop offset="0" stop-color="#3d8fe6"/><stop offset="1" stop-color="#5db4f6"/></linearGradient></defs>
<rect x="1813.6" y="36.3" width="15.3" height="30.3" rx="4.4" fill="#0c0c0c" stroke="#707070" stroke-width="1"/>
<rect x="1815.7" y="38.4" width="11.1" height="26.1" rx="2.6" fill="url(#ph)"/>
<rect x="1818.7" y="39.2" width="5" height="1.3" rx="0.65" fill="#0c0c0c"/>
<rect x="643" y="120.8" width="9" height="9.1" rx="2.2" fill="none" stroke="#8c8c8c" stroke-width="1.8"/>
<rect x="643" y="134.9" width="9" height="9.1" rx="2.2" fill="none" stroke="#8c8c8c" stroke-width="1.8"/>
<rect x="657" y="120.8" width="9" height="9.1" rx="2.2" fill="none" stroke="#8c8c8c" stroke-width="1.8"/>
<rect x="657" y="134.9" width="9" height="9.1" rx="2.2" fill="none" stroke="#8c8c8c" stroke-width="1.8"/>
<path d="M717.9 121.5 L705.8 132.3 L717.9 143.4" fill="none" stroke="#9a9a9a" stroke-width="2.2" stroke-linecap="round" stroke-linejoin="round" />
<path d="M744.4 121.5 L756.5 132.3 L744.4 143.4" fill="none" stroke="#9a9a9a" stroke-width="2.2" stroke-linecap="round" stroke-linejoin="round" />
<g transform="translate(785.2 119.1) scale(0.845)"><rect x="0" y="0" width="30" height="30.4" rx="7.2" fill="#1e96ff"/><rect x="2.9" y="2.9" width="24.2" height="24.6" rx="4.6" fill="none" stroke="#0f3c6e" stroke-width="1.3"/><path d="M7.6 21.6 L18.6 10.2" stroke="#1a1a1a" stroke-width="2.9" stroke-linecap="round"/><path d="M15.4 6.4 C18.4 6.2 21 7.6 22.6 9.6 L24 11.2 L21.4 13.6 L20 12.2 C19 11 17.6 9.2 15.4 6.4Z" fill="#1a1a1a"/></g>
<g transform="translate(1087.9 121.8) scale(0.85)"><path d="M0 20.6 V3.4 a3.4 3.4 0 0 1 3.4-3.4 h5.4 a3.6 3.6 0 0 1 2.4 0.9 l1.1 1 a3.6 3.6 0 0 0 2.4 0.9 h11 a3.4 3.4 0 0 1 3.4 3.4 v17.8 a3.5 3.5 0 0 1-3.5 3.5 h-22.1 a3.5 3.5 0 0 1-3.5-3.5z" fill="#42a9ff"/><path d="M3.2 6.75 H25.9" stroke="#16181c" stroke-width="1.6" stroke-linecap="round" opacity="0.85"/></g>
<path transform="translate(1390 121.6) scale(0.84)" fill="url(#sw)" d="M17.9 0.3 C23 4 27.5 10.5 27 16.5 C28.5 19 29.6 22.5 29.1 25.9 C27.8 23.6 25.8 22.6 23.6 23.4 C20.5 25.6 16.5 26.6 12.5 25.8 C7.5 24.8 3 21.5 0 17 C3.5 19.5 7.5 20.8 11 20.4 C13.2 20.2 15 19.4 16.4 18.3 C11.5 14.5 6.5 9.5 2.9 4.5 C6 7.2 9.2 9.6 12.6 11.8 C10.4 9.2 8.2 6.2 6.4 3.2 C10.5 7 15 10.8 19.6 13.4 C20.8 9.2 20.2 4.4 17.9 0.3 Z"/>
<path d="M1063.7 124 L1068.7 132.3 L1063.7 140.6" fill="none" stroke="#a5a5a5" stroke-width="2.2" stroke-linecap="round" stroke-linejoin="round" />
<path d="M1366.1 124 L1371.1 132.3 L1366.1 140.6" fill="none" stroke="#a5a5a5" stroke-width="2.2" stroke-linecap="round" stroke-linejoin="round" />
<path d="M1603.6 124 L1608.6 132.3 L1603.6 140.6" fill="none" stroke="#a5a5a5" stroke-width="2.2" stroke-linecap="round" stroke-linejoin="round" />
<path d="M3678.1 123.8 H3652.6 M3661.1 115.9 L3652.5 123.8 L3661.1 131.7" fill="none" stroke="#9a9a9a" stroke-width="2.1" stroke-linecap="round" stroke-linejoin="round" />
<path d="M3652.5 140 H3678 M3669.6 132.2 L3678.1 140 L3669.6 147.7" fill="none" stroke="#9a9a9a" stroke-width="2.1" stroke-linecap="round" stroke-linejoin="round" />
<path d="M3705.6 122.5 H3717.5" fill="none" stroke="#9a9a9a" stroke-width="1.9" stroke-linecap="round" stroke-linejoin="round" />
<path d="M3705.6 128.9 H3714.1" fill="none" stroke="#9a9a9a" stroke-width="1.9" stroke-linecap="round" stroke-linejoin="round" />
<path d="M3705.6 135.1 H3717.5" fill="none" stroke="#9a9a9a" stroke-width="1.9" stroke-linecap="round" stroke-linejoin="round" />
<path d="M3705.6 141.4 H3714.1" fill="none" stroke="#9a9a9a" stroke-width="1.9" stroke-linecap="round" stroke-linejoin="round" />
<rect x="3721.6" y="121" width="15.8" height="21.9" rx="3.4" fill="#9d9d9d"/>
<path d="M3784.6 132.8 H3806.2 M3795.3 121.9 V143.5" fill="none" stroke="#a2a2a2" stroke-width="2.1" stroke-linecap="round" stroke-linejoin="round" />
<rect x="3766.3" y="37.8" width="36.2" height="28" rx="5.2" fill="none" stroke="#dcdcdc" stroke-width="2.8"/>
<path d="M3789.4 38.5 V65.3" fill="none" stroke="#dcdcdc" stroke-width="2.6" stroke-linecap="round" stroke-linejoin="round" />
<path d="M3794 44.9 H3797.8" fill="none" stroke="#dcdcdc" stroke-width="1.9" stroke-linecap="round" stroke-linejoin="round" />
<path d="M3794 49.1 H3797.8" fill="none" stroke="#dcdcdc" stroke-width="1.9" stroke-linecap="round" stroke-linejoin="round" />
<path d="M3794 53.3 H3797.8" fill="none" stroke="#dcdcdc" stroke-width="1.9" stroke-linecap="round" stroke-linejoin="round" />
<path d="M3042.7 191.3 H3058.1 L3053.8 196.4 V203.05 A10.25 8.1 0 0 1 3060.65 210.7 H3040.15 A10.25 8.1 0 0 1 3047 203.05 V196.4 Z" fill="none" stroke="#efefef" stroke-width="1.9" stroke-linecap="round" stroke-linejoin="round" />
<path d="M3049.4 211 h2 l-0.4 8.4 l-0.6 2.6 l-0.6-2.6z" fill="#efefef"/>
<path d="M49.2 2038.5 H67.8 M58.4 2029.2 V2047.8" fill="none" stroke="#dcdcdc" stroke-width="2.5" stroke-linecap="round" stroke-linejoin="round" />
<path d="M111.6 2033.9 H124.6" fill="none" stroke="#8a8a8a" stroke-width="1.8" stroke-linecap="round" stroke-linejoin="round" />
<path d="M114.2 2038 H122" fill="none" stroke="#8a8a8a" stroke-width="1.8" stroke-linecap="round" stroke-linejoin="round" />
<path d="M116 2042.1 H120.2" fill="none" stroke="#8a8a8a" stroke-width="1.8" stroke-linecap="round" stroke-linejoin="round" />
<path d="M133.4 2036.4 L138.8 2041.4 L144.2 2036.4" fill="none" stroke="#8a8a8a" stroke-width="2.0" stroke-linecap="round" stroke-linejoin="round" />
<circle cx="537" cy="2038" r="12.1" fill="none" stroke="#b4b4b4" stroke-width="2"/>
<path d="M537 2029.6 V2037.8 H530.4" fill="none" stroke="#b4b4b4" stroke-width="2.0" stroke-linecap="round" stroke-linejoin="round" stroke-linecap="butt"/>
<rect x="559" y="2026" width="24.1" height="24.1" rx="3.6" fill="none" stroke="#b4b4b4" stroke-width="2.1"/>
<path d="M562.2 2037.9 H571.6 M566.9 2033.2 V2042.6 M574.2 2037.9 H579.8" fill="none" stroke="#b4b4b4" stroke-width="1.9" stroke-linecap="round" stroke-linejoin="round" /></svg>
<div class="a s" id="ln1" style="right:3095.45px;top:187.14px;line-height:52px;font-size:40px;color:#76767b;transform:scaleX(0.93);transform-origin:100% 50%;-webkit-text-stroke:0.7px;">1</div>
<div class="a s" id="ln2" style="right:3095.45px;top:244.84px;line-height:52px;font-size:40px;color:#76767b;transform:scaleX(0.93);transform-origin:100% 50%;-webkit-text-stroke:0.7px;">2</div>
<div class="a s" id="ln3" style="right:3095.45px;top:300.84px;line-height:52px;font-size:40px;color:#76767b;transform:scaleX(0.93);transform-origin:100% 50%;-webkit-text-stroke:0.7px;">3</div>
<div class="a s" id="ln4" style="right:3096.45px;top:356.84px;line-height:52px;font-size:40px;color:#76767b;transform:scaleX(0.93);transform-origin:100% 50%;-webkit-text-stroke:0.7px;">4</div>
<div class="a s" id="ln5" style="right:3095.45px;top:412.84px;line-height:52px;font-size:40px;color:#76767b;transform:scaleX(0.93);transform-origin:100% 50%;-webkit-text-stroke:0.7px;">5</div>
<div class="a s" id="ln6" style="right:3095.45px;top:468.84px;line-height:52px;font-size:40px;color:#76767b;transform:scaleX(0.93);transform-origin:100% 50%;-webkit-text-stroke:0.7px;">6</div>
<div class="a s" id="ln7" style="right:3095.45px;top:524.84px;line-height:52px;font-size:40px;color:#76767b;transform:scaleX(0.93);transform-origin:100% 50%;-webkit-text-stroke:0.7px;">7</div>
<div class="a s" id="ln8" style="right:3095.45px;top:580.84px;line-height:52px;font-size:40px;color:#76767b;transform:scaleX(0.93);transform-origin:100% 50%;-webkit-text-stroke:0.7px;">8</div>
<div class="a s" id="ln9" style="right:3095.45px;top:636.84px;line-height:52px;font-size:40px;color:#76767b;transform:scaleX(0.93);transform-origin:100% 50%;-webkit-text-stroke:0.7px;">9</div>
<div class="a s" id="ln10" style="right:3095.45px;top:692.84px;line-height:52px;font-size:40px;color:#76767b;transform:scaleX(0.93);transform-origin:100% 50%;-webkit-text-stroke:0.7px;">10</div>
<div class="a s" id="ln11" style="right:3095.45px;top:748.84px;line-height:52px;font-size:40px;color:#76767b;transform:scaleX(0.93);transform-origin:100% 50%;-webkit-text-stroke:0.7px;">11</div>
<div class="a s" id="ln12" style="right:3095.45px;top:804.84px;line-height:52px;font-size:40px;color:#76767b;transform:scaleX(0.93);transform-origin:100% 50%;-webkit-text-stroke:0.7px;">12</div>
<div class="a s" id="ln13" style="right:3095.45px;top:860.84px;line-height:52px;font-size:40px;color:#76767b;transform:scaleX(0.93);transform-origin:100% 50%;-webkit-text-stroke:0.7px;">13</div>
<div class="a s" id="ln14" style="right:3096.45px;top:916.84px;line-height:52px;font-size:40px;color:#76767b;transform:scaleX(0.93);transform-origin:100% 50%;-webkit-text-stroke:0.7px;">14</div>
<div class="a s" id="ln15" style="right:3095.45px;top:972.84px;line-height:52px;font-size:40px;color:#76767b;transform:scaleX(0.93);transform-origin:100% 50%;-webkit-text-stroke:0.7px;">15</div>
<div class="a s" id="ln16" style="right:3095.45px;top:1028.84px;line-height:52px;font-size:40px;color:#ececec;transform:scaleX(0.93);transform-origin:100% 50%;-webkit-text-stroke:0.7px;">16</div>
<div class="a s" id="ln17" style="right:3095.45px;top:1084.84px;line-height:52px;font-size:40px;color:#76767b;transform:scaleX(0.93);transform-origin:100% 50%;-webkit-text-stroke:0.7px;">17</div>
<div class="a s" id="ln18" style="right:3095.45px;top:1140.84px;line-height:52px;font-size:40px;color:#76767b;transform:scaleX(0.93);transform-origin:100% 50%;-webkit-text-stroke:0.7px;">18</div>
<div class="a s" id="ln19" style="right:3095.45px;top:1196.84px;line-height:52px;font-size:40px;color:#76767b;transform:scaleX(0.93);transform-origin:100% 50%;-webkit-text-stroke:0.7px;">19</div>
<div class="a s" id="ln20" style="right:3095.45px;top:1252.84px;line-height:52px;font-size:40px;color:#76767b;transform:scaleX(0.93);transform-origin:100% 50%;-webkit-text-stroke:0.7px;">20</div>
<div class="a s" id="ln21" style="right:3095.45px;top:1308.84px;line-height:52px;font-size:40px;color:#76767b;transform:scaleX(0.93);transform-origin:100% 50%;-webkit-text-stroke:0.7px;">21</div>
<div class="a s" id="ln22" style="right:3095.45px;top:1364.84px;line-height:52px;font-size:40px;color:#76767b;transform:scaleX(0.93);transform-origin:100% 50%;-webkit-text-stroke:0.7px;">22</div>
<div class="a s" id="ln23" style="right:3095.45px;top:1420.84px;line-height:52px;font-size:40px;color:#76767b;transform:scaleX(0.93);transform-origin:100% 50%;-webkit-text-stroke:0.7px;">23</div>
<div class="a s" id="ln24" style="right:3096.45px;top:1476.84px;line-height:52px;font-size:40px;color:#76767b;transform:scaleX(0.93);transform-origin:100% 50%;-webkit-text-stroke:0.7px;">24</div>
<div class="a s" id="title" style="left:703.5px;top:23.23px;line-height:33px;font-size:25.6px;color:#e4e4e4;font-weight:700;-webkit-text-stroke:0;letter-spacing:0.591px;-webkit-text-stroke:0.45px;">BlockLayoutExamples</div>
<div class="a s" id="branch" style="left:703.5px;top:53.28px;line-height:29px;font-size:22px;color:#9c9c9c;letter-spacing:0.684px;-webkit-text-stroke:0.5px;">main</div>
<div class="a s" id="tr1" style="left:111px;top:182.29px;line-height:34px;font-size:26px;color:#fafafa;letter-spacing:0.456px;">BlockLayoutExamples</div>
<div class="a s" id="tr2" style="left:139px;top:226.29px;line-height:34px;font-size:26px;color:#fafafa;letter-spacing:0.456px;">BlockLayoutExamples</div>
<div class="a s" id="tr3" style="left:169px;top:269.99px;line-height:34px;font-size:26px;color:#fafafa;letter-spacing:0.195px;">Assets</div>
<div class="a s" id="tr4" style="left:167px;top:313.99px;line-height:34px;font-size:26px;color:#fafafa;letter-spacing:0.495px;">BlockLayoutExamplesApp</div>
<div class="a s" id="tr5" style="left:167px;top:357.99px;line-height:34px;font-size:26px;color:#ececec;letter-spacing:0.440px;">HelloWorldView</div>
<div class="a s" id="trM" style="left:555.8px;top:359.70px;line-height:29px;font-size:22.5px;color:#ababab;font-weight:700;-webkit-text-stroke:0;transform:scaleX(1.08);transform-origin:0 50%;">M</div>
<div class="a s" id="filter" style="left:165.7px;top:2018.79px;line-height:34px;font-size:26px;color:#9a9a9a;letter-spacing:0.576px;-webkit-text-stroke:0.6px;">Filter</div>
<div class="a s" id="sch" style="left:1531.0px;top:37.90px;line-height:29px;font-size:22.5px;color:#dfdfdf;letter-spacing:0.521px;">BlockLayoutExamples</div>
<div class="a s" id="dev" style="left:1844.0px;top:37.90px;line-height:29px;font-size:22.5px;color:#dfdfdf;letter-spacing:0.383px;">Russ’ iPhone 15 Pro</div>
<div class="a s" id="st1" style="left:2453.5px;top:37.90px;line-height:29px;font-size:22.5px;color:#dfdfdf;letter-spacing:0.428px;">BlockLayoutExamples:</div>
<div class="a s" id="st2" style="left:2695.8px;top:37.90px;line-height:29px;font-size:22.5px;color:#e6e6e6;font-weight:700;-webkit-text-stroke:0;letter-spacing:0.145px;">Ready</div>
<div class="a s" id="st3" style="left:2771.4px;top:37.20px;line-height:29px;font-size:22.5px;color:#dfdfdf;">|</div>
<div class="a s" id="st4" style="left:2784.3px;top:37.90px;line-height:29px;font-size:22.5px;color:#dfdfdf;letter-spacing:0.493px;">Today at 7:53 PM</div>
<div class="a s" id="jb1" style="left:821.0px;top:117.70px;line-height:29px;font-size:22.5px;color:#dfdfdf;letter-spacing:0.410px;">BlockLayoutExamples</div>
<div class="a s" id="jb2" style="left:1123.0px;top:117.70px;line-height:29px;font-size:22.5px;color:#dfdfdf;letter-spacing:0.410px;">BlockLayoutExamples</div>
<div class="a s" id="jb3" style="left:1424.6px;top:117.70px;line-height:29px;font-size:22.5px;color:#dfdfdf;letter-spacing:0.474px;">HelloWorldView</div>
<div class="a s" id="jb4" style="left:1663.6px;top:117.70px;line-height:29px;font-size:22.5px;color:#dfdfdf;letter-spacing:0.753px;">body</div>
<div class="a s" id="pv1" style="left:3161.0px;top:191.30px;line-height:29px;font-size:22.5px;color:#ffffff;letter-spacing:0.336px;-webkit-text-stroke:0.55px;">HelloWorldView</div>
<div class="a s" id="lc" style="left:3559px;top:2048.30px;line-height:29px;font-size:22.5px;color:#9b9b9b;font-weight:700;-webkit-text-stroke:0;letter-spacing:0.248px;">Line: 16  Col: 32</div>
<div class="a s" id="ptxt" style="left:3327.2px;top:533.73px;line-height:33px;font-size:25.6px;color:#000;letter-spacing:0.219px;">I'm a pull-in view!</div>
<div class="a s" id="pbox" style="left:1630.0px;top:116.38px;line-height:31px;font-size:24px;color:#ffffff;font-weight:700;-webkit-text-stroke:0;">P</div>
</body></html>
